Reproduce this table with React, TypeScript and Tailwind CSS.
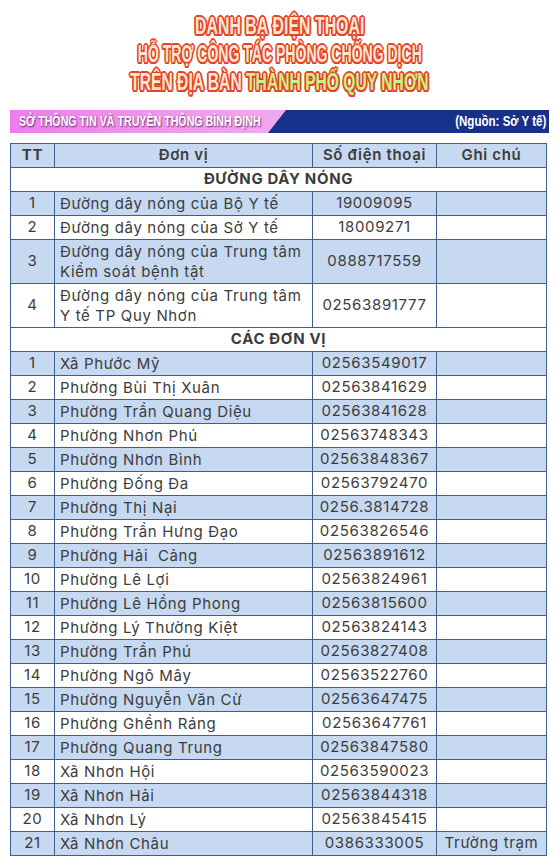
import React from "react";

const hot: [string, string, string][] = [
  ["1", "Đường dây nóng của Bộ Y tế", "19009095"],
  ["2", "Đường dây nóng của Sở Y tế", "18009271"],
  ["3", "Đường dây nóng của Trung tâm Kiểm soát bệnh tật", "0888717559"],
  ["4", "Đường dây nóng của Trung tâm Y tế TP Quy Nhơn", "02563891777"],
];

const units: [string, string, string, string?][] = [
  ["1", "Xã Phước Mỹ", "02563549017"],
  ["2", "Phường Bùi Thị Xuân", "02563841629"],
  ["3", "Phường Trần Quang Diệu", "02563841628"],
  ["4", "Phường Nhơn Phú", "02563748343"],
  ["5", "Phường Nhơn Bình", "02563848367"],
  ["6", "Phường Đống Đa", "02563792470"],
  ["7", "Phường Thị Nại", "0256.3814728"],
  ["8", "Phường Trần Hưng Đạo", "02563826546"],
  ["9", "Phường Hải\u00a0 Cảng", "02563891612"],
  ["10", "Phường Lê Lợi", "02563824961"],
  ["11", "Phường Lê Hồng Phong", "02563815600"],
  ["12", "Phường Lý Thường Kiệt", "02563824143"],
  ["13", "Phường Trần Phú", "02563827408"],
  ["14", "Phường Ngô Mây", "02563522760"],
  ["15", "Phường Nguyễn Văn Cừ", "02563647475"],
  ["16", "Phường Ghềnh Ráng", "02563647761"],
  ["17", "Phường Quang Trung", "02563847580"],
  ["18", "Xã Nhơn Hội", "02563590023"],
  ["19", "Xã Nhơn Hải", "02563844318"],
  ["20", "Xã Nhơn Lý", "02563845415"],
  ["21", "Xã Nhơn Châu", "0386333005", "Trường trạm"],
];

const td = "border border-[#3d5e8e] p-0";

function Row({ r, blue, tall }: { r: (string | undefined)[]; blue: boolean; tall?: boolean }) {
  const bg = blue ? "bg-[#c6d9f1]" : "bg-white";
  const h = tall ? "h-[44px]" : "h-[24px]";
  return (
    <tr className={`${bg} ${h}`}>
      <td className={`${td} text-center`}>{r[0]}</td>
      <td className={`${td} pl-[5px] pr-[4px] leading-[20px] text-left`}>{r[1]}</td>
      <td className={`${td} text-center`}>{r[2]}</td>
      <td className={`${td} text-center`}>{r[3] ?? ""}</td>
    </tr>
  );
}

const outline =
  "[text-shadow:-1.5px_-1.5px_0_#e6431f,1.5px_-1.5px_0_#e6431f,-1.5px_1.5px_0_#e6431f,1.5px_1.5px_0_#e6431f,0_-2px_0_#e6431f,0_2px_0_#e6431f,-2.5px_0_0_#e6431f,2.5px_0_0_#e6431f]";

export default function App() {
  return (
    <div className="w-[559px] h-[868px] bg-white overflow-hidden">
      <div className="pt-[12px] flex flex-col items-center font-['Liberation_Sans',Arial,sans-serif] font-bold text-[23px] leading-[28px] text-[#fde8d8]">
        <div className={`scale-x-[0.69] whitespace-nowrap ${outline}`}>DANH BẠ ĐIỆN THOẠI</div>
        <div className={`scale-x-[0.61] whitespace-nowrap ${outline}`}>HỖ TRỢ CÔNG TÁC PHÒNG CHỐNG DỊCH</div>
        <div className={`scale-x-[0.68] whitespace-nowrap ${outline}`}>
          TRÊN ĐỊA BÀN <span className="text-[#c8f08c]">THÀNH PHỐ QUY NHƠN</span>
        </div>
      </div>

      <div className="mx-[10px] mt-[14px] h-[23px] bg-[#17318a] flex items-center justify-between font-['Liberation_Sans',Arial,sans-serif] font-bold text-white">
        <div className="h-full w-[276px] bg-gradient-to-r from-[#ee7cee] to-[#f0aaec] [clip-path:polygon(0_0,100%_0,258px_100%,0_100%)] flex items-center pl-[9px]">
          <span className="inline-block whitespace-nowrap origin-left scale-x-[0.71] text-[15px] [text-shadow:1px_1px_2px_rgba(90,20,90,0.9)]">SỞ THÔNG TIN VÀ TRUYỀN THÔNG BÌNH ĐỊNH</span>
        </div>
        <span className="inline-block whitespace-nowrap origin-right scale-x-[0.77] pr-[4px] text-[15px]">(Nguồn: Sở Y tế)</span>
      </div>

      <table className="mx-[10px] mt-[10px] w-[536px] border-collapse table-fixed font-['Inter','Noto_Sans',sans-serif] text-[15px] text-[#3c3c3c] tracking-[0.65px]">
        <colgroup>
          <col className="w-[44px]" />
          <col className="w-[258px]" />
          <col className="w-[124px]" />
          <col className="w-[110px]" />
        </colgroup>
        <tbody>
          <tr className="bg-[#c6d9f1] h-[24px]">
            <td className={`${td} text-center font-bold`}>TT</td>
            <td className={`${td} text-center font-semibold`}>Đơn vị</td>
            <td className={`${td} text-center font-semibold`}>Số điện thoại</td>
            <td className={`${td} text-center font-semibold`}>Ghi chú</td>
          </tr>
          <tr className="bg-white h-[24px]">
            <td colSpan={4} className={`${td} text-center font-bold`}>ĐƯỜNG DÂY NÓNG</td>
          </tr>
          {hot.map((r, i) => (
            <Row key={r[0]} r={r} blue={i % 2 === 0} tall={i >= 2} />
          ))}
          <tr className="bg-white h-[24px]">
            <td colSpan={4} className={`${td} text-center font-bold`}>CÁC ĐƠN VỊ</td>
          </tr>
          {units.map((r, i) => (
            <Row key={r[0]} r={r} blue={i % 2 === 0} />
          ))}
        </tbody>
      </table>
    </div>
  );
}
